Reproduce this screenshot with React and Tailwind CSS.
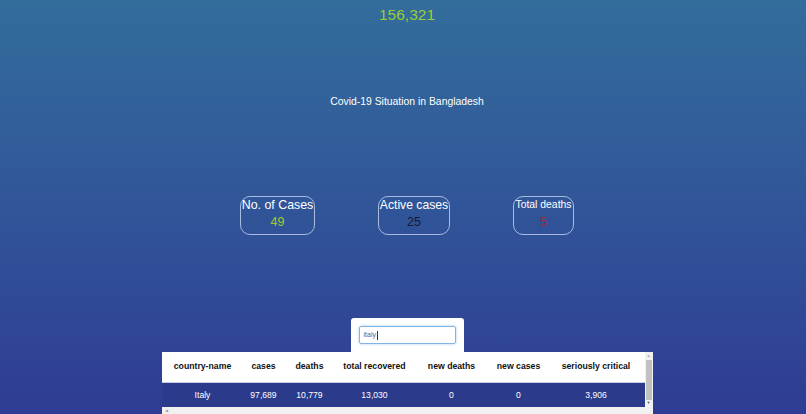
import React from "react";

const COLUMNS = [
  { key: "country", label: "country-name" },
  { key: "cases", label: "cases" },
  { key: "deaths", label: "deaths" },
  { key: "recovered", label: "total recovered" },
  { key: "newDeaths", label: "new deaths" },
  { key: "newCases", label: "new cases" },
  { key: "critical", label: "seriously critical" },
];

const ROWS = [
  {
    country: "Italy",
    cases: "97,689",
    deaths: "10,779",
    recovered: "13,030",
    newDeaths: "0",
    newCases: "0",
    critical: "3,906",
  },
];

const GRID = "grid grid-cols-[82px_40px_52px_78px_76px_58px_97px]";

const StatCard = ({ title, value, width, titleClass, valueClass }) => (
  <div className={`${width} flex flex-col items-center rounded-[10px] border border-[#a9bbe0] pt-px pb-1`}>
    <h3 className={`${titleClass} text-white`}>{title}</h3>
    <p className={`mt-[2px] text-[12.5px] leading-[16px] ${valueClass}`}>{value}</p>
  </div>
);

const App = () => {
  return (
    <div
      className="flex h-[414px] flex-col items-center overflow-hidden bg-gradient-to-b from-[#336d9c] to-[#2f3b94] pl-[8px]"
      style={{ fontFamily: '"Liberation Sans", Arial, sans-serif' }}
    >
      <h1 className="pt-[6px] text-[15.5px] leading-[18px] text-[#9acd32]">156,321</h1>
      <h2 className="mt-[72px] text-[10.4px] leading-[12px] text-white">Covid-19 Situation in Bangladesh</h2>

      <div className="mt-[88px] flex items-start gap-[63px]">
        <StatCard
          title="No. of Cases"
          value="49"
          width="w-[75px]"
          titleClass="text-[12.4px] leading-[14px]"
          valueClass="text-[#9acd32]"
        />
        <StatCard
          title="Active cases"
          value="25"
          width="w-[72px]"
          titleClass="text-[12.2px] leading-[14px]"
          valueClass="text-[#141a33]"
        />
        <StatCard
          title="Total deaths"
          value="5"
          width="w-[61px]"
          titleClass="text-[10.4px] leading-[14px]"
          valueClass="text-[#b3202e]"
        />
      </div>

      <div className="mt-[83px] h-[34px] w-[113px] rounded-t-[3px] bg-white px-[8px] pt-[8px]">
        <div className="flex h-[18px] w-[97px] items-center rounded-[2px] border border-[#82b5e3] px-[4px] shadow-[0_0_3px_#a9cdef]">
          <span className="text-[7px] text-[#666]">italy</span>
          <span className="ml-px h-[9px] w-px bg-[#333]" />
        </div>
      </div>

      <div className="flex w-[491px] flex-col bg-white">
        <div className="flex">
          <div className="w-[483px]">
            <div className={`${GRID} h-[31px] items-center border-b border-[#c9cfe3] bg-white`}>
              {COLUMNS.map((col) => (
                <div key={col.key} className="text-center text-[8.7px] font-bold text-[#111]">
                  {col.label}
                </div>
              ))}
            </div>
            {ROWS.map((row) => (
              <div key={row.country} className={`${GRID} h-[24px] items-center bg-[#2c3a8b]`}>
                {COLUMNS.map((col) => (
                  <div key={col.key} className="text-center text-[8.6px] text-white">
                    {row[col.key]}
                  </div>
                ))}
              </div>
            ))}
          </div>
          <div className="flex w-[8px] flex-col items-center bg-[#f1f1f1]">
            <span className="mt-[2px] text-[4px] leading-[4px] text-[#a3a3a3]">▲</span>
            <div className="mt-[2px] h-[40px] w-[6px] rounded-[1px] bg-[#c1c1c1]" />
            <span className="mt-auto mb-[2px] text-[4px] leading-[4px] text-[#505050]">▼</span>
          </div>
        </div>
        <div className="flex h-[7px] items-center bg-[#f1f1f1] pl-[3px]">
          <span className="text-[4px] leading-[4px] text-[#a3a3a3]">◀</span>
        </div>
      </div>
    </div>
  );
};

export default App;
